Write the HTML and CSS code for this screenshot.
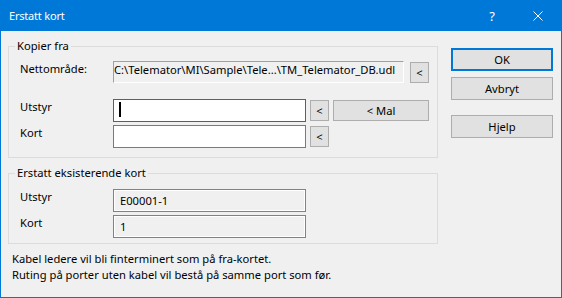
FILE: index.html
```html
<!DOCTYPE html>
<html lang="no">
<head>
<meta charset="utf-8">
<title>Erstatt kort</title>
<link rel="stylesheet" href="styles.css">
</head>
<body>
<div class="dialog">
  <div class="titlebar">
    <span class="title">Erstatt kort</span>
    <span class="tb-btn help">?</span>
    <span class="tb-btn close">
      <svg width="10" height="10" viewBox="0 0 10 10"><path d="M0.5 0.5 L9.5 9.5 M9.5 0.5 L0.5 9.5" stroke="#fff" stroke-width="1" fill="none"/></svg>
    </span>
  </div>
  <div class="body">
    <div class="main">
      <fieldset class="group g1">
        <legend>Kopier fra</legend>
        <div class="row">
          <span class="lbl">Nettområde:</span>
          <div class="field ro path">C:\Telemator\MI\Sample\Tele...\TM_Telemator_DB.udl</div>
          <button class="btn small gap6">&lt;</button>
        </div>
        <div class="row r2">
          <span class="lbl">Utstyr</span>
          <div class="field edit focus"><span class="caret"></span></div>
          <button class="btn small">&lt;</button>
          <button class="btn mal">&lt; Mal</button>
        </div>
        <div class="row r3">
          <span class="lbl">Kort</span>
          <div class="field edit"></div>
          <button class="btn small">&lt;</button>
        </div>
      </fieldset>
      <fieldset class="group g2">
        <legend>Erstatt eksisterende kort</legend>
        <div class="row">
          <span class="lbl">Utstyr</span>
          <div class="field dis">E00001-1</div>
        </div>
        <div class="row r3">
          <span class="lbl">Kort</span>
          <div class="field dis">1</div>
        </div>
      </fieldset>
      <p class="note">Kabel ledere vil bli finterminert som på fra-kortet.<br>Ruting på porter uten kabel vil bestå på samme port som før.</p>
    </div>
    <div class="side">
      <button class="btn big default">OK</button>
      <button class="btn big cancel">Avbryt</button>
      <button class="btn big helpbtn">Hjelp</button>
    </div>
  </div>
</div>
</body>
</html>
```
FILE: styles.css
```css
* { box-sizing: border-box; }
html, body { margin: 0; padding: 0; }
body {
  font-family: "Noto Sans", sans-serif;
  font-size: 11.2px;
  color: #000;
  background: #f0f0f0;
}
.dialog {
  width: 562px;
  height: 298px;
  border: 1px solid #0078d7;
  border-top: 0;
  background: #f0f0f0;
  display: flex;
  flex-direction: column;
}
.titlebar {
  height: 31px;
  flex: none;
  background: #0078d7;
  color: #fff;
  display: flex;
  align-items: center;
  padding-left: 8px;
}
.title { flex: 1; line-height: 16px; font-size: 11px; letter-spacing: -0.2px; }
.tb-btn {
  width: 46px;
  height: 31px;
  display: flex;
  align-items: center;
  justify-content: center;
}
.help { font-size: 13px; }
.close svg { display: block; }

.body {
  display: flex;
  padding: 0 8px 0 7px;
}
.main { width: 430px; padding-top: 7px; }
.side {
  width: 102px;
  margin-left: 13px;
  padding-top: 17px;
  display: flex;
  flex-direction: column;
}

.group {
  margin: 0;
  border: 1px solid #dcdcdc;
  padding: 7px 0 9px 11px;
  min-inline-size: 0;
}
.group legend {
  padding: 0 2px;
  margin-left: -5px;
  line-height: 16px;
}
.g2 { margin-top: 7px; padding-top: 8px; padding-bottom: 5px; }

.row { display: flex; align-items: flex-start; }
.r2 { margin-top: 16px; }
.r3 { margin-top: 3px; }
.lbl { width: 93px; line-height: 16px; flex: none; }

.field { flex: none; height: 23px; white-space: nowrap; overflow: hidden; }
.path {
  width: 291px;
  height: 22px;
  border-top: 1px solid #a0a0a0;
  border-left: 1px solid #a0a0a0;
  border-right: 1px solid #fff;
  border-bottom: 1px solid #fff;
  background: #f0f0f0;
  line-height: 15px;
  padding-left: 0;
}
.edit {
  width: 193px;
  border: 1px solid #7a7a7a;
  background: #fff;
}
.edit.focus { border-color: #0078d7; }
.caret {
  display: block;
  width: 2px;
  height: 15px;
  margin: 2px 0 0 5px;
  background: #000;
}
.dis {
  width: 193px;
  border: 1px solid #828282;
  box-shadow: inset 0 0 0 1px #fff;
  background: #f0f0f0;
  padding-left: 6px;
  line-height: 21px;
}

.btn {
  font: inherit;
  color: #000;
  background: #e1e1e1;
  border: 1px solid #adadad;
  padding: 0;
  margin: 0;
  text-align: center;
}
.small { width: 19px; height: 21px; margin: 1px 0 0 4px; line-height: 19px; }
.gap6 { margin-left: 6px; }
.mal { width: 96px; height: 21px; margin: 1px 0 0 4px; line-height: 19px; }
.big { width: 102px; height: 23px; line-height: 21px; }
.default { border: 2px solid #0078d7; line-height: 19px; }
.cancel { margin-top: 6px; }
.helpbtn { margin-top: 15px; }

.note {
  margin: 7px 0 0 4px;
  line-height: 16px;
}
```
